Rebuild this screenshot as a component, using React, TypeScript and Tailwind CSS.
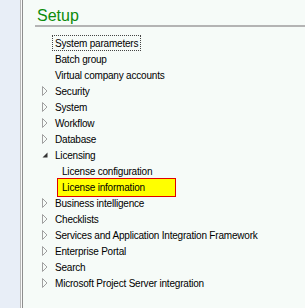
import React from "react";

type Item = {label: string; kind: "leaf" | "closed" | "open" | "sub"; focus?: boolean; selected?: boolean};

const items: Item[] = [
    {label: "System parameters", kind: "leaf", focus: true},
    {label: "Batch group", kind: "leaf"},
    {label: "Virtual company accounts", kind: "leaf"},
    {label: "Security", kind: "closed"},
    {label: "System", kind: "closed"},
    {label: "Workflow", kind: "closed"},
    {label: "Database", kind: "closed"},
    {label: "Licensing", kind: "open"},
    {label: "License configuration", kind: "sub"},
    {label: "License information", kind: "sub", selected: true},
    {label: "Business intelligence", kind: "closed"},
    {label: "Checklists", kind: "closed"},
    {label: "Services and Application Integration Framework", kind: "closed"},
    {label: "Enterprise Portal", kind: "closed"},
    {label: "Search", kind: "closed"},
    {label: "Microsoft Project Server integration", kind: "closed"},
];

const Arrow = ({open}: {open: boolean}) => (
    open ? (
        <svg width="6" height="6" viewBox="0 0 6 6" className="block">
            <polygon points="5.5,0.5 5.5,5.5 0.5,5.5" fill="#333"/>
        </svg>
    ) : (
        <svg width="6" height="10" viewBox="0 0 6 10" className="block">
            <polygon points="0.5,0.5 5,5 0.5,9.5" fill="none" stroke="#a0a0a0"/>
        </svg>
    )
);

const Row = ({item}: {item: Item}) => {
    const hasArrow = item.kind === "closed" || item.kind === "open";
    let label = <span className="pl-[3px] whitespace-nowrap">{item.label}</span>;
    if (item.focus) {
        label = <span className="h-4 pl-[2px] pr-[2px] whitespace-nowrap flex items-center border border-dotted border-[#444]">{item.label}</span>;
    }
    if (item.kind === "sub") {
        label = item.selected
            ? <span className="h-[19px] w-[119px] ml-[5px] pl-[4px] whitespace-nowrap flex items-center bg-[#ffff00] border border-[#e00000]">{item.label}</span>
            : <span className="pl-[10px] whitespace-nowrap">{item.label}</span>;
    }
    return (
        <div className="h-4 flex items-center">
            <div className="w-[14px] shrink-0 flex justify-center">
                {hasArrow && <Arrow open={item.kind === "open"}/>}
            </div>
            {label}
        </div>
    );
};

export default function App() {
    return (
        <div className="w-[305px] h-[308px] flex bg-[#f6fbf8] overflow-hidden">
            <div className="w-[20px] bg-[#e8eef7] shrink-0"/>
            <div className="w-[1px] bg-[#b8b8b8] shrink-0"/>
            <div className="w-[1px] bg-[#fafafa] shrink-0"/>
            <div className="w-[1px] bg-[#8e8e8e] shrink-0"/>
            <div className="flex-1 pl-[12px]">
                <div className="pt-[7px] h-[27px] pl-[2px] border-b-2 border-[#b4b4b4] text-[16px] leading-[18px] text-[#0c8c0c]" style={{fontFamily: "'Liberation Sans', Arial, sans-serif"}}>
                    Setup
                </div>
                <div className="pt-[8px] pl-[3px] text-[10px] tracking-[-0.2px] text-black" style={{fontFamily: "'Liberation Sans', Arial, sans-serif"}}>
                    {items.map(it => <Row key={it.label} item={it}/>)}
                </div>
            </div>
        </div>
    );
}
